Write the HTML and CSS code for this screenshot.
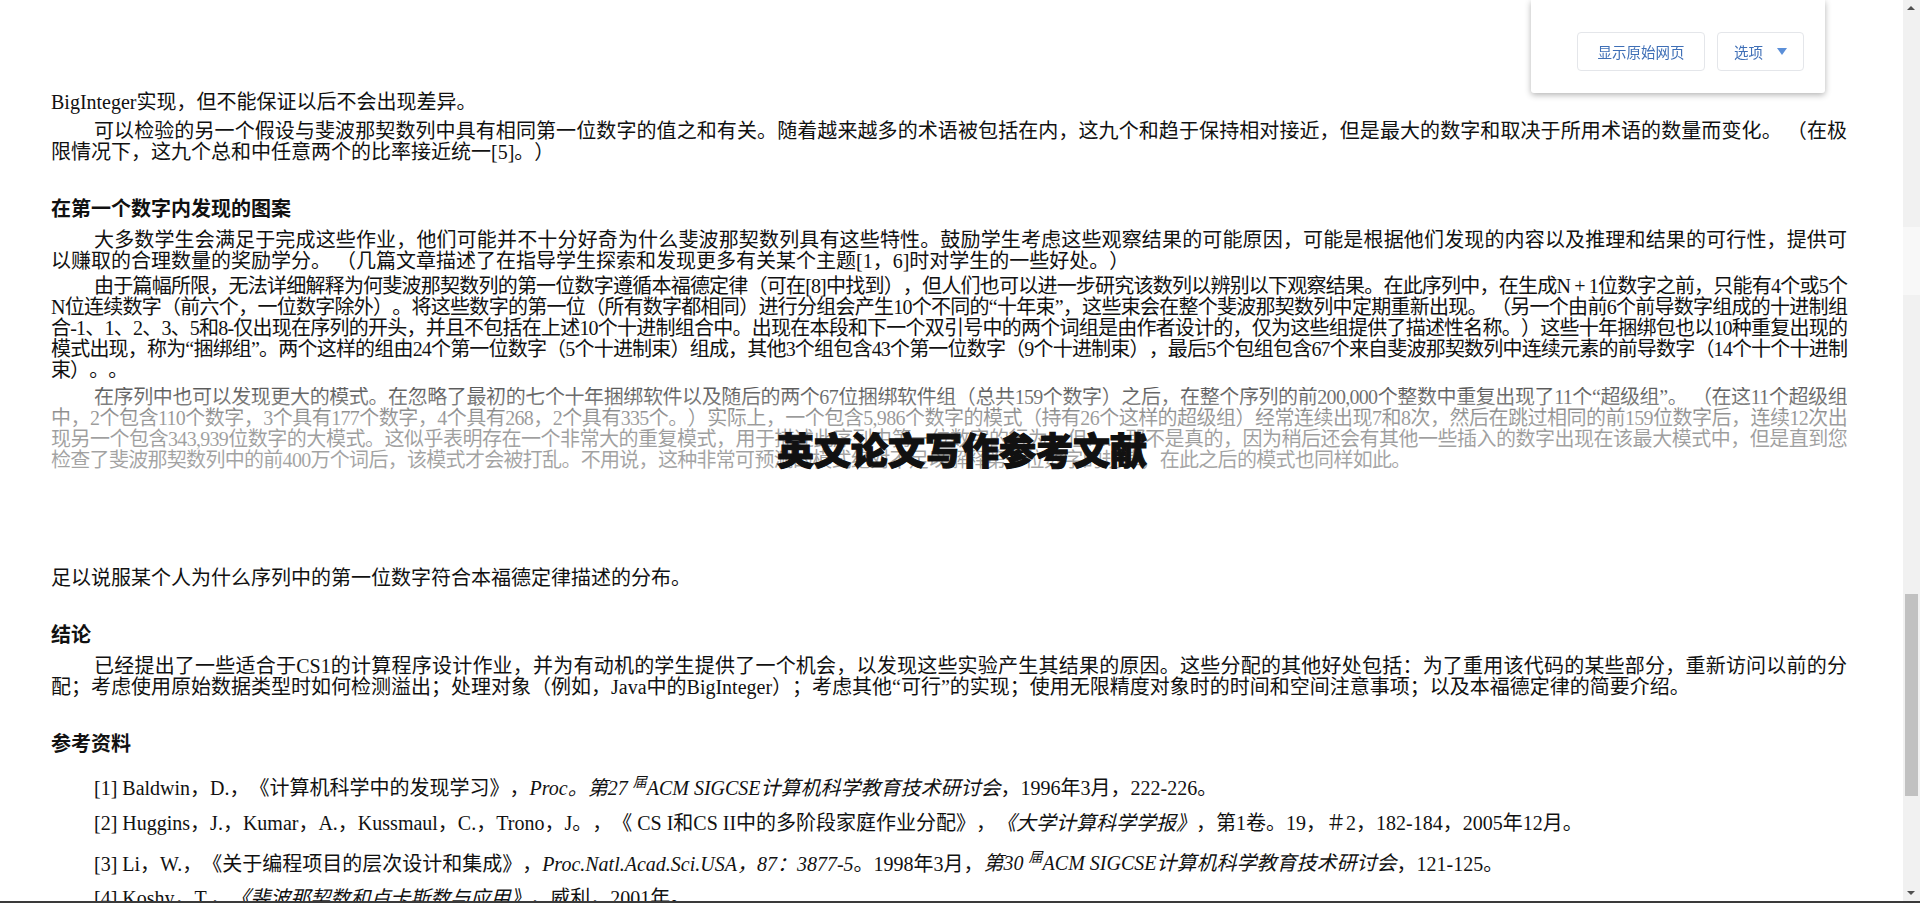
FILE: index.html
```html
<!DOCTYPE html>
<html lang="zh-CN">
<head>
    <meta charset="UTF-8">
    <meta name="viewport" content="width=device-width, initial-scale=1.0">
    <title>英文论文写作参考文献</title>
    <link rel="stylesheet" href="styles.css">
</head>
<body>
    <div class="article">
        <p class="lead">BigInteger实现，但不能保证以后不会出现差异。</p>
        <p>可以检验的另一个假设与斐波那契数列中具有相同第一位数字的值之和有关。随着越来越多的术语被包括在内，这九个和趋于保持相对接近，但是最大的数字和取决于所用术语的数量而变化。 （在极限情况下，这九个总和中任意两个的比率接近统一[5]。）</p>

        <h2>在第一个数字内发现的图案</h2>
        <p>大多数学生会满足于完成这些作业，他们可能并不十分好奇为什么斐波那契数列具有这些特性。鼓励学生考虑这些观察结果的可能原因，可能是根据他们发现的内容以及推理和结果的可行性，提供可以赚取的合理数量的奖励学分。 （几篇文章描述了在指导学生探索和发现更多有关某个主题[1，6]时对学生的一些好处。）</p>
        <p class="dense">由于篇幅所限，无法详细解释为何斐波那契数列的第一位数字遵循本福德定律（可在[8]中找到），但人们也可以进一步研究该数列以辨别以下观察结果。在此序列中，在生成N + 1位数字之前，只能有4个或5个N位连续数字（前六个，一位数字除外）。将这些数字的第一位（所有数字都相同）进行分组会产生10个不同的“十年束”，这些束会在整个斐波那契数列中定期重新出现。 （另一个由前6个前导数字组成的十进制组合-1、1、2、3、5和8-仅出现在序列的开头，并且不包括在上述10个十进制组合中。出现在本段和下一个双引号中的两个词组是由作者设计的，仅为这些组提供了描述性名称。）这些十年捆绑包也以10种重复出现的模式出现，称为“捆绑组”。两个这样的组由24个第一位数字（5个十进制束）组成，其他3个组包含43个第一位数字（9个十进制束），最后5个包组包含67个来自斐波那契数列中连续元素的前导数字（14个十个十进制束）。。</p>

        <!-- hidden part of the article -->
        <div class="fold">
            <p>在序列中也可以发现更大的模式。在忽略了最初的七个十年捆绑软件以及随后的两个67位捆绑软件组（总共159个数字）之后，在整个序列的前200,000个整数中重复出现了11个“超级组”。 （在这11个超级组中，2个包含110个数字，3个具有177个数字，4个具有268，2个具有335个。）实际上，一个包含5,986个数字的模式（持有26个这样的超级组）经常连续出现7和8次，然后在跳过相同的前159位数字后，连续12次出现另一个包含343,939位数字的大模式。这似乎表明存在一个非常大的重复模式，用于描述此序列中第一位数字的行为，但……那不是真的，因为稍后还会有其他一些插入的数字出现在该最大模式中，但是直到您检查了斐波那契数列中的前400万个词后，该模式才会被打乱。不用说，这种非常可预测的模式绝对不足以解释第一位数字的规律，在此之后的模式也同样如此。</p>
            <div class="fold-title">英文论文写作参考文献</div>
        </div>

        <p class="lead">足以说服某个人为什么序列中的第一位数字符合本福德定律描述的分布。</p>

        <h2>结论</h2>
        <p>已经提出了一些适合于CS1的计算程序设计作业，并为有动机的学生提供了一个机会，以发现这些实验产生其结果的原因。这些分配的其他好处包括：为了重用该代码的某些部分，重新访问以前的分配；考虑使用原始数据类型时如何检测溢出；处理对象（例如，Java中的BigInteger）；考虑其他“可行”的实现；使用无限精度对象时的时间和空间注意事项；以及本福德定律的简要介绍。</p>

        <h2>参考资料</h2>
        <div class="refs">
            <p>[1] Baldwin，D.，《计算机科学中的发现学习》，<i>Proc。第27 <sup>届</sup>ACM SIGCSE计算机科学教育技术研讨会</i>，1996年3月，222-226。</p>
            <p>[2] Huggins，J.，Kumar，A.，Kussmaul，C.，Trono，J。，《 CS I和CS II中的多阶段家庭作业分配》，<i>《大学计算科学学报》</i>，第1卷。19，＃2，182-184，2005年12月。</p>
            <p>[3] Li，W.，《关于编程项目的层次设计和集成》，<i>Proc.Natl.Acad.Sci.USA，87：3877-5</i>。1998年3月，<i>第30 <sup>届</sup>ACM SIGCSE计算机科学教育技术研讨会</i>，121-125。</p>
            <p>[4] Koshy，T.，<i>《斐波那契数和卢卡斯数与应用》</i>，威利，2001年。</p>
        </div>
    </div>

    <!-- translate bar -->
    <div class="translate-box">
        <button class="tbtn">显示原始网页</button>
        <button class="tbtn">选项 <span class="caret"></span></button>
    </div>

    <div class="scrollbar">
        <span class="arrow up"></span>
        <span class="mark"></span>
        <span class="thumb"></span>
        <span class="arrow down"></span>
    </div>
    <div class="bottom-line"></div>
</body>
</html>
```

FILE: styles.css
```css
* {
    box-sizing: border-box;
}

body {
    margin: 0;
    overflow: hidden;
    background: #fff;
    color: #111;
    font-family: "Liberation Serif", "Noto Sans CJK SC", serif;
    font-size: 20px;
    text-spacing-trim: space-all;
}

.article {
    width: calc(100% - 17px);
    padding: 92px 56px 0 51px;
}

.article p {
    margin: 0 0 4px;
    line-height: 21px;
    text-indent: 43px;
    text-align: justify;
}

/* paragraph full of digits and brackets sits a bit tighter */
.article p.dense {
    letter-spacing: -0.9px;
}

.article p.lead {
    text-indent: 0;
    margin-bottom: 8px;
}

h2 {
    margin: 33px 0 10px;
    font-family: "Noto Sans CJK SC", sans-serif;
    font-size: 20px;
    font-weight: 700;
    line-height: 24px;
    color: #111;
}

h2 + p {
    margin-top: -1px;
}

/* faded preview */
.fold {
    position: relative;
    height: 160px;
    margin-top: 6px;
    margin-bottom: 21px;
    overflow: hidden;
}

.fold p {
    letter-spacing: -0.7px;
}

.fold::after {
    content: "";
    position: absolute;
    inset: 0;
    background: linear-gradient(to bottom,
        rgba(255, 255, 255, 0.3) 0,
        rgba(255, 255, 255, 0.58) 30px,
        rgba(255, 255, 255, 0.62) 82px,
        #fff 100px);
}

.fold-title {
    position: absolute;
    left: 26px;
    right: 0;
    top: 40px;
    z-index: 1;
    text-align: center;
    font-family: "Noto Sans CJK SC", sans-serif;
    font-size: 37px;
    font-weight: 900;
    line-height: 44px;
    color: #111;
    -webkit-text-stroke: 1.2px #111;
}

.refs {
    padding-left: 43px;
    margin-top: 17px;
}

.refs p {
    text-indent: 0;
    margin-bottom: 14px;
}

.refs sup {
    font-size: 14px;
    font-style: italic;
}

/* translate popup */
.translate-box {
    position: fixed;
    top: 0;
    left: 1531px;
    width: 294px;
    height: 93px;
    display: flex;
    gap: 12px;
    padding: 32px 20px 0 46px;
    background: #fff;
    border-radius: 0 0 3px 3px;
    box-shadow: 0 2px 6px rgba(0, 0, 0, 0.3);
}

.tbtn {
    height: 39px;
    padding: 0 16px;
    border: 1px solid #e4e6ea;
    border-radius: 4px;
    background: #fff;
    color: #3f6fb6;
    font-family: "Noto Sans CJK SC", sans-serif;
    font-size: 14.5px;
    display: flex;
    align-items: center;
    gap: 14px;
}

.tbtn:first-child {
    width: 128px;
    justify-content: center;
}

.tbtn:last-child {
    width: 87px;
}

.caret {
    width: 0;
    height: 0;
    border-left: 5px solid transparent;
    border-right: 5px solid transparent;
    border-top: 7px solid #5b8fd8;
}

/* fake scrollbar */
.scrollbar {
    position: fixed;
    top: 0;
    right: 0;
    width: 17px;
    height: 100%;
    background: #f1f1f1;
}

.scrollbar .arrow {
    position: absolute;
    left: 4px;
    width: 0;
    height: 0;
    border-left: 4px solid transparent;
    border-right: 4px solid transparent;
}

.scrollbar .up {
    top: 6px;
    border-bottom: 4px solid #505050;
}

.scrollbar .down {
    bottom: 8px;
    border-top: 4px solid #505050;
}

.scrollbar .mark {
    position: absolute;
    top: 227px;
    left: 0;
    width: 17px;
    height: 68px;
    background: #f8f8f8;
}

.scrollbar .thumb {
    position: absolute;
    top: 594px;
    left: 2px;
    width: 13px;
    height: 202px;
    background: #c1c1c1;
}

.bottom-line {
    position: fixed;
    left: 0;
    right: 0;
    bottom: 0;
    height: 2px;
    background: #3a3a3a;
}
```
